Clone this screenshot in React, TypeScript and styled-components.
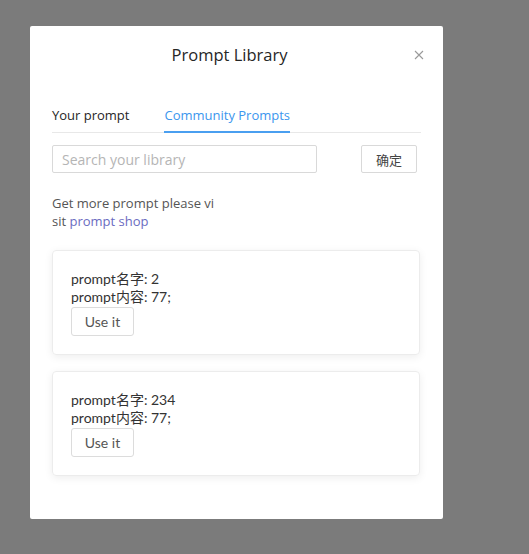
import React from "react";
import styled, { createGlobalStyle } from "styled-components";

const Global = createGlobalStyle`
  html, body { margin: 0; padding: 0; }
  body { background: #7b7b7b; font-family: "Open Sans", "Noto Sans", "Noto Sans CJK SC", sans-serif; }
`;

const Page = styled.div`
  width: 529px;
  height: 554px;
  padding: 26px 0 0 30px;
  box-sizing: border-box;
  background: #7b7b7b;
`;

const Modal = styled.div`
  width: 413px;
  height: 493px;
  background: #fff;
  border-radius: 2px;
  box-sizing: border-box;
  display: flex;
  flex-direction: column;
`;

const Header = styled.div`
  position: relative;
  height: 56px;
  display: flex;
  align-items: center;
  justify-content: center;
  padding-right: 14px;
`;

const Title = styled.div`
  font-size: 16.5px;
  color: #262626;
`;

const Close = styled.button`
  position: absolute;
  right: 18px;
  top: 23px;
  width: 12px;
  height: 12px;
  padding: 0;
  border: none;
  background: none;
  display: flex;
  align-items: center;
  justify-content: center;
`;

const Body = styled.div`
  padding: 0 22px;
  display: flex;
  flex-direction: column;
`;

const TabNav = styled.div`
  margin-top: 22px;
  display: flex;
  gap: 35px;
  border-bottom: 1px solid #e8e8e8;
`;

const Tab = styled.div<{ $active?: boolean }>`
  font-size: 13px;
  line-height: 22px;
  padding-bottom: 5px;
  color: ${(p) => (p.$active ? "#3b96ee" : "#262626")};
  border-bottom: 2px solid ${(p) => (p.$active ? "#4a9ff0" : "transparent")};
  margin-bottom: -1px;
`;

const SearchRow = styled.div`
  margin-top: 12px;
  display: flex;
  align-items: center;
  justify-content: space-between;
  padding-right: 4px;
`;

const Input = styled.input`
  width: 265px;
  height: 28px;
  box-sizing: border-box;
  border: 1px solid #d9d9d9;
  border-radius: 2px;
  padding: 0 9px;
  font-family: inherit;
  font-size: 14px;
  color: #333;
  outline: none;
  &::placeholder { color: #b5b5b5; }
`;

const Button = styled.button`
  height: 28px;
  box-sizing: border-box;
  border: 1px solid #d9d9d9;
  border-radius: 2px;
  background: #fff;
  color: #444;
  font-size: 13px;
  font-family: "Noto Sans CJK SC", sans-serif;
  padding: 0 14px;
  margin-left: 1px;
`;

const Info = styled.div`
  margin-top: 21px;
  width: 164px;
  font-size: 13px;
  line-height: 18px;
  color: #555;
  word-break: break-all;
`;

const Link = styled.a`
  color: #6b6bbf;
  text-decoration: none;
`;

const Cards = styled.div`
  margin-top: 20px;
  display: flex;
  flex-direction: column;
  gap: 16px;
  padding-right: 1px;
`;

const Card = styled.div`
  height: 105px;
  box-sizing: border-box;
  border: 1px solid #ececec;
  border-radius: 4px;
  box-shadow: 0 2px 8px rgba(0, 0, 0, 0.07);
  padding: 19px 18px;
  font-family: Lato, "Noto Sans CJK SC", sans-serif;
  font-size: 14px;
  line-height: 18px;
  color: #333;
`;

const Line = styled.div``;

const UseButton = styled.button`
  margin-top: 1px;
  height: 29px;
  width: 63px;
  box-sizing: border-box;
  border: 1px solid #dcdcdc;
  border-radius: 3px;
  background: #fff;
  color: #555;
  font-family: Lato, sans-serif;
  font-size: 14px;
  padding: 0;
`;

const prompts = [
  { name: "2", content: "77;" },
  { name: "234", content: "77;" },
];

export default function App() {
  return (
    <Page>
      <Global />
      <Modal>
        <Header>
          <Title>Prompt Library</Title>
          <Close aria-label="close">
            <svg width="10" height="10" viewBox="0 0 10 10">
              <path d="M1 1 L9 9 M9 1 L1 9" stroke="#9a9a9a" strokeWidth="1.1" />
            </svg>
          </Close>
        </Header>
        <Body>
          <TabNav>
            <Tab>Your prompt</Tab>
            <Tab $active>Community Prompts</Tab>
          </TabNav>
          <SearchRow>
            <Input placeholder="Search your library" />
            <Button>确定</Button>
          </SearchRow>
          <Info>
            Get more prompt please visit <Link href="#">prompt shop</Link>
          </Info>
          <Cards>
            {prompts.map((p) => (
              <Card key={p.name}>
                <Line>prompt名字: {p.name}</Line>
                <Line>prompt内容: {p.content}</Line>
                <UseButton>Use it</UseButton>
              </Card>
            ))}
          </Cards>
        </Body>
      </Modal>
    </Page>
  );
}
